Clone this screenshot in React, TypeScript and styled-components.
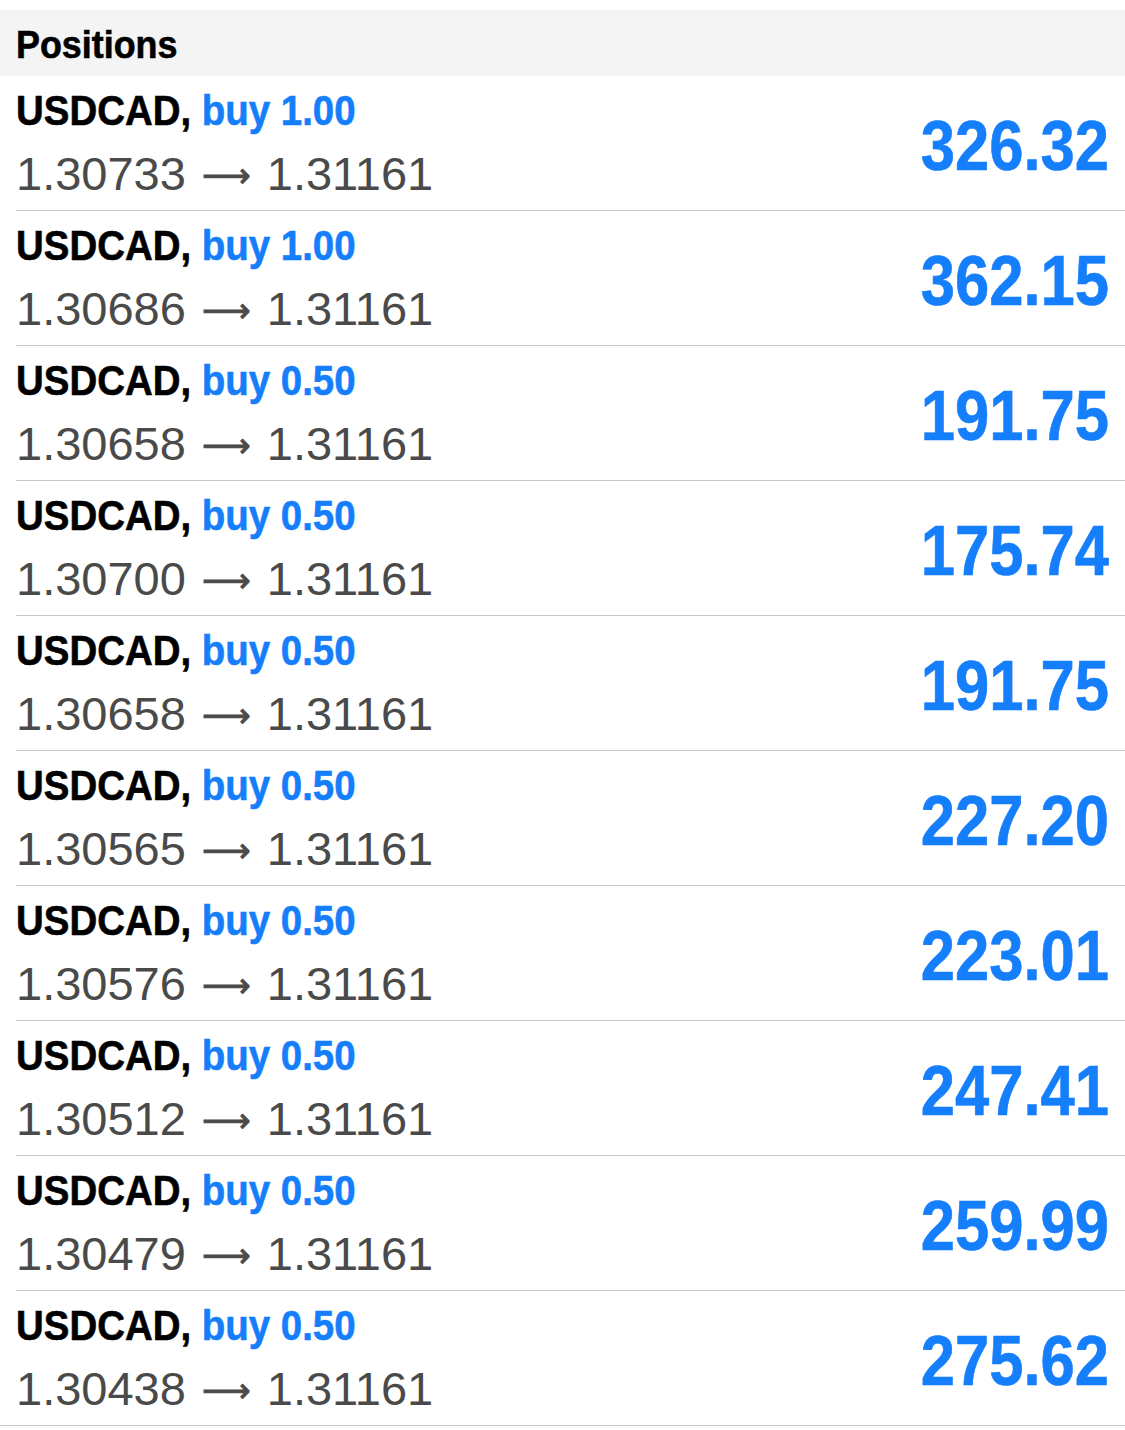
import React from 'react';
import styled, { createGlobalStyle } from 'styled-components';

const GlobalStyle = createGlobalStyle`
  html, body {
    margin: 0;
    padding: 0;
    background: #ffffff;
  }
`;

const Page = styled.div`
  padding-top: 10px;
  width: 1125px;
  font-family: 'Liberation Sans', Arial, sans-serif;
`;

// Helvetica Neue Condensed isn't available, so squeeze the bold face horizontally
const Condensed = styled.span<{ $scale: number; $origin?: string }>`
  display: inline-block;
  white-space: nowrap;
  transform: scaleX(${(p) => p.$scale});
  transform-origin: ${(p) => p.$origin || 'left'} center;
  -webkit-text-stroke: 0.6px currentColor;
`;

const SectionHeader = styled.div`
  height: 66px;
  box-sizing: border-box;
  padding: 4px 16px 0;
  background: #f4f4f4;
  display: flex;
  align-items: center;
  font-weight: 700;
  font-size: 39px;
  color: #000;
`;

const List = styled.div`
  border-bottom: 1px solid #c8c7cc;
`;

const Row = styled.div<{ $last?: boolean }>`
  position: relative;
  height: 134px;
  padding: 0 16px;
  display: flex;
  align-items: center;
  justify-content: space-between;
  box-sizing: border-box;

  &::after {
    content: '';
    display: ${(p) => (p.$last ? 'none' : 'block')};
    position: absolute;
    left: 16px;
    right: 0;
    bottom: -1px;
    height: 1px;
    background: #c8c7cc;
  }

  & + & {
    margin-top: 1px;
  }
`;

const Info = styled.div`
  display: flex;
  flex-direction: column;
`;

const Title = styled.div`
  font-weight: 700;
  font-size: 42px;
  line-height: 48px;
  padding-top: 2px;
  color: #000;
`;

const Side = styled.span`
  color: #157efb;
`;

const Prices = styled.div`
  font-size: 47px;
  line-height: 52px;
  margin-top: 13px;
  color: #4a4a4a;
  white-space: nowrap;
`;

const Arrow = styled.span`
  font-family: 'DejaVu Sans', sans-serif;
  font-size: 34px;
  margin: 0 3px;
  vertical-align: 3px;
  -webkit-text-stroke: 0.8px currentColor;
`;

const Profit = styled.div`
  font-weight: 700;
  font-size: 70px;
  line-height: 1;
  padding-top: 5px;
  color: #157efb;
`;

type Position = {
  symbol: string;
  volume: string;
  open: string;
  current: string;
  profit: string;
};

const positions: Position[] = [
  { symbol: 'USDCAD', volume: '1.00', open: '1.30733', current: '1.31161', profit: '326.32' },
  { symbol: 'USDCAD', volume: '1.00', open: '1.30686', current: '1.31161', profit: '362.15' },
  { symbol: 'USDCAD', volume: '0.50', open: '1.30658', current: '1.31161', profit: '191.75' },
  { symbol: 'USDCAD', volume: '0.50', open: '1.30700', current: '1.31161', profit: '175.74' },
  { symbol: 'USDCAD', volume: '0.50', open: '1.30658', current: '1.31161', profit: '191.75' },
  { symbol: 'USDCAD', volume: '0.50', open: '1.30565', current: '1.31161', profit: '227.20' },
  { symbol: 'USDCAD', volume: '0.50', open: '1.30576', current: '1.31161', profit: '223.01' },
  { symbol: 'USDCAD', volume: '0.50', open: '1.30512', current: '1.31161', profit: '247.41' },
  { symbol: 'USDCAD', volume: '0.50', open: '1.30479', current: '1.31161', profit: '259.99' },
  { symbol: 'USDCAD', volume: '0.50', open: '1.30438', current: '1.31161', profit: '275.62' },
];

const App: React.FC = () => {
  return (
    <>
      <GlobalStyle />
      <Page>
        <SectionHeader>
          <Condensed $scale={0.92}>Positions</Condensed>
        </SectionHeader>
        <List>
          {positions.map((p, i) => (
            <Row key={i} $last={i === positions.length - 1}>
              <Info>
                <Title>
                  <Condensed $scale={0.915}>
                    {p.symbol}, <Side>buy {p.volume}</Side>
                  </Condensed>
                </Title>
                <Prices>
                  {p.open} <Arrow>⟶</Arrow> {p.current}
                </Prices>
              </Info>
              <Profit>
                <Condensed $scale={0.88} $origin="right">
                  {p.profit}
                </Condensed>
              </Profit>
            </Row>
          ))}
        </List>
      </Page>
    </>
  );
};

export default App;
